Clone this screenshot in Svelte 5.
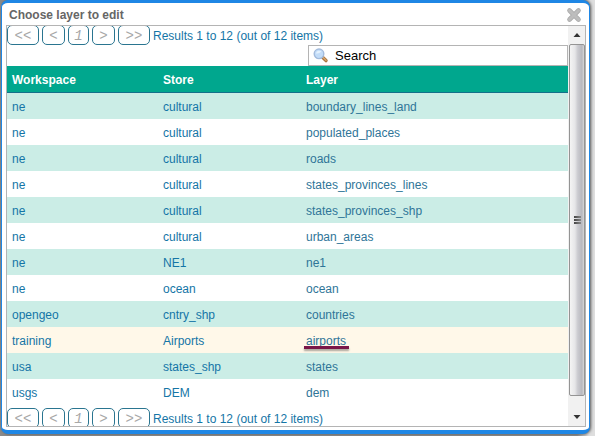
<script>
  const layers = [
    ['ne', 'cultural', 'boundary_lines_land'],
    ['ne', 'cultural', 'populated_places'],
    ['ne', 'cultural', 'roads'],
    ['ne', 'cultural', 'states_provinces_lines'],
    ['ne', 'cultural', 'states_provinces_shp'],
    ['ne', 'cultural', 'urban_areas'],
    ['ne', 'NE1', 'ne1'],
    ['ne', 'ocean', 'ocean'],
    ['opengeo', 'cntry_shp', 'countries'],
    ['training', 'Airports', 'airports'],
    ['usa', 'states_shp', 'states'],
    ['usgs', 'DEM', 'dem']
  ];
  const selected = 'airports';
  const pages = ['<<', '<', '1', '>', '>>'];
  let query = $state('Search');
</script>

{#snippet pager(place)}
  <nav class="pager {place}" aria-label="Result pages">
    {#each pages as page}
      <button type="button" class:wide={page.length > 1} class:num={page === '1'} disabled>{page}</button>
    {/each}
    <span>Results 1 to 12 (out of 12 items)</span>
  </nav>
{/snippet}

<div class="page">
  <section class="dialog" role="dialog" aria-labelledby="title">
    <header>
      <h1 id="title">Choose layer to edit</h1>
      <button type="button" class="close" aria-label="Close">
        <svg width="16" height="16" viewBox="0 0 16 16">
          <path d="M3.5 3.5L12.5 12.5M12.5 3.5L3.5 12.5" stroke="#adadad" stroke-width="4.6" stroke-linecap="round" />
          <path d="M3.5 3.5L12.5 12.5M12.5 3.5L3.5 12.5" stroke="#bdbdbd" stroke-width="3" stroke-linecap="round" />
        </svg>
      </button>
    </header>

    <div class="frame">
      <div class="content">
        {@render pager('top')}
        <label class="search">
          <svg width="16" height="16" viewBox="0 0 16 16" aria-hidden="true">
            <path d="M9.8 9.6L13 12.6" stroke="#a9743f" stroke-width="3.4" stroke-linecap="round" />
            <path d="M10.4 9.8L13 12.2" stroke="#dba76c" stroke-width="1.4" stroke-linecap="round" />
            <circle cx="6" cy="5.8" r="4.8" fill="#c2dcf8" stroke="#a3bbdc" stroke-width="1.4" />
            <path d="M3 5.4A3.2 3.2 0 0 1 8.4 3.6Q6 6 3 5.4Z" fill="#e4f1fd" />
          </svg>
          <input type="text" aria-label="Search" bind:value={query} />
        </label>

        <table>
          <thead>
            <tr><th class="ws">Workspace</th><th class="st">Store</th><th>Layer</th></tr>
          </thead>
          <tbody>
            {#each layers as [workspace, store, layer]}
              <tr class:selected={layer === selected}>
                <td>{workspace}</td>
                <td>{store}</td>
                <td><a href="#{layer}" class:marked={layer === selected}>{layer}</a></td>
              </tr>
            {/each}
          </tbody>
        </table>
        {@render pager('bottom')}
      </div>

      <div class="scrollbar" aria-hidden="true">
        <svg width="16" height="18" viewBox="0 0 16 18"><path d="M4.5 11L8 7L11.5 11Z" fill="#333" /></svg>
        <div class="thumb"><i></i><i></i><i></i></div>
        <div class="track"></div>
        <svg width="16" height="18" viewBox="0 0 16 18"><path d="M4.5 7L8 11L11.5 7Z" fill="#333" /></svg>
      </div>
    </div>
  </section>
</div>

<style>
  :global(body) {
    margin: 0;
  }
  * {
    box-sizing: border-box;
  }
  .page {
    display: flex;
    height: 100vh;
    padding: 0 5px 2px 1px;
    overflow: hidden;
    background: linear-gradient(to right, #8b8b8b 0 2px, #8b8b8b 97%, #dedede 99%);
    font: 12px/16px "Liberation Sans", Arial, sans-serif;
    color: #1475a6;
  }
  .dialog {
    flex: 1;
    display: flex;
    flex-direction: column;
    min-width: 0;
    padding: 1px 3px 3px 4px;
    border: solid #1f87e5;
    border-width: 3px 1px 4px 1px;
    border-radius: 7px;
    background: #fff;
    box-shadow: 1px 0 3px #555;
  }
  header {
    display: flex;
    justify-content: space-between;
    align-items: center;
    height: 21px;
    padding: 0 4px 0 3px;
  }
  h1 {
    margin: 0;
    font-size: 12px;
    line-height: 16px;
    color: #666;
  }
  .close {
    width: 16px;
    height: 16px;
    padding: 0;
    border: 0;
    background: none;
  }
  .close svg {
    display: block;
  }
  .frame {
    flex: 1;
    display: flex;
    min-height: 0;
    border: 1px solid #b4b4b4;
    overflow: hidden;
  }
  .content {
    flex: 1;
    min-width: 0;
    overflow: hidden;
  }
  .pager {
    display: flex;
    gap: 3px;
    height: 19px;
    overflow: hidden;
  }
  .top {
    align-items: flex-end;
  }
  .bottom {
    align-items: flex-start;
    margin-top: 3px;
  }
  .pager button {
    flex: none;
    width: 23px;
    height: 20px;
    padding: 0;
    border: 1px solid #2a7590;
    border-radius: 5px;
    background: #fff;
    font: italic 14px/20px "Liberation Mono", monospace;
    color: #a8a8a8;
  }
  .pager button.wide {
    width: 32px;
  }
  .pager button.num {
    width: 21px;
  }
  .pager span {
    height: 20px;
    padding-top: 1px;
    line-height: 20px;
  }
  .search {
    display: flex;
    align-items: center;
    width: 260px;
    height: 21px;
    margin-left: auto;
    padding: 0 4px;
    border: 1px solid #b4b4b4;
  }
  .search input {
    flex: 1;
    min-width: 0;
    padding: 0 0 0 6px;
    border: 0;
    outline: 0;
    background: none;
    font: 13px/18px "Liberation Sans", Arial, sans-serif;
    color: #000;
  }
  table {
    width: 100%;
    table-layout: fixed;
    border-collapse: separate;
    border-spacing: 0;
  }
  th,
  td {
    height: 26px;
    padding: 2px 5px 0;
    text-align: left;
  }
  th {
    height: 27px;
    border-bottom: 1px solid #14708a;
    background: #00a78e;
    color: #fff;
  }
  .ws {
    width: 151px;
  }
  .st {
    width: 143px;
  }
  tbody tr:nth-child(odd) {
    background: #cbede6;
  }
  tbody tr.selected {
    background: #fff8e9;
  }
  td a {
    color: #2f7598;
    text-decoration: none;
  }
  .marked {
    position: relative;
  }
  .marked::after {
    content: "";
    position: absolute;
    left: -2px;
    right: -3px;
    top: 12px;
    height: 3px;
    background: #7a1648;
    box-shadow: 0 2px 2px #0005;
  }
  .scrollbar {
    flex: none;
    display: flex;
    flex-direction: column;
    width: 17px;
    padding: 0 0 0 1px;
    background: #f1f1f1;
  }
  .scrollbar svg {
    flex: none;
    display: block;
  }
  .thumb {
    flex: 1;
    display: flex;
    flex-direction: column;
    align-items: center;
    justify-content: center;
    gap: 1px;
    border: 1px solid #949494;
    border-radius: 2px;
    background: linear-gradient(to right, #f4f4f4, #e6e6e8 35%, #cbcbd0 55%, #b8b8be 85%, #d8d8d8);
  }
  .thumb i {
    width: 7px;
    height: 2px;
    background: linear-gradient(to right, #444, #888);
  }
  .track {
    flex: none;
    height: 12px;
  }
</style>
